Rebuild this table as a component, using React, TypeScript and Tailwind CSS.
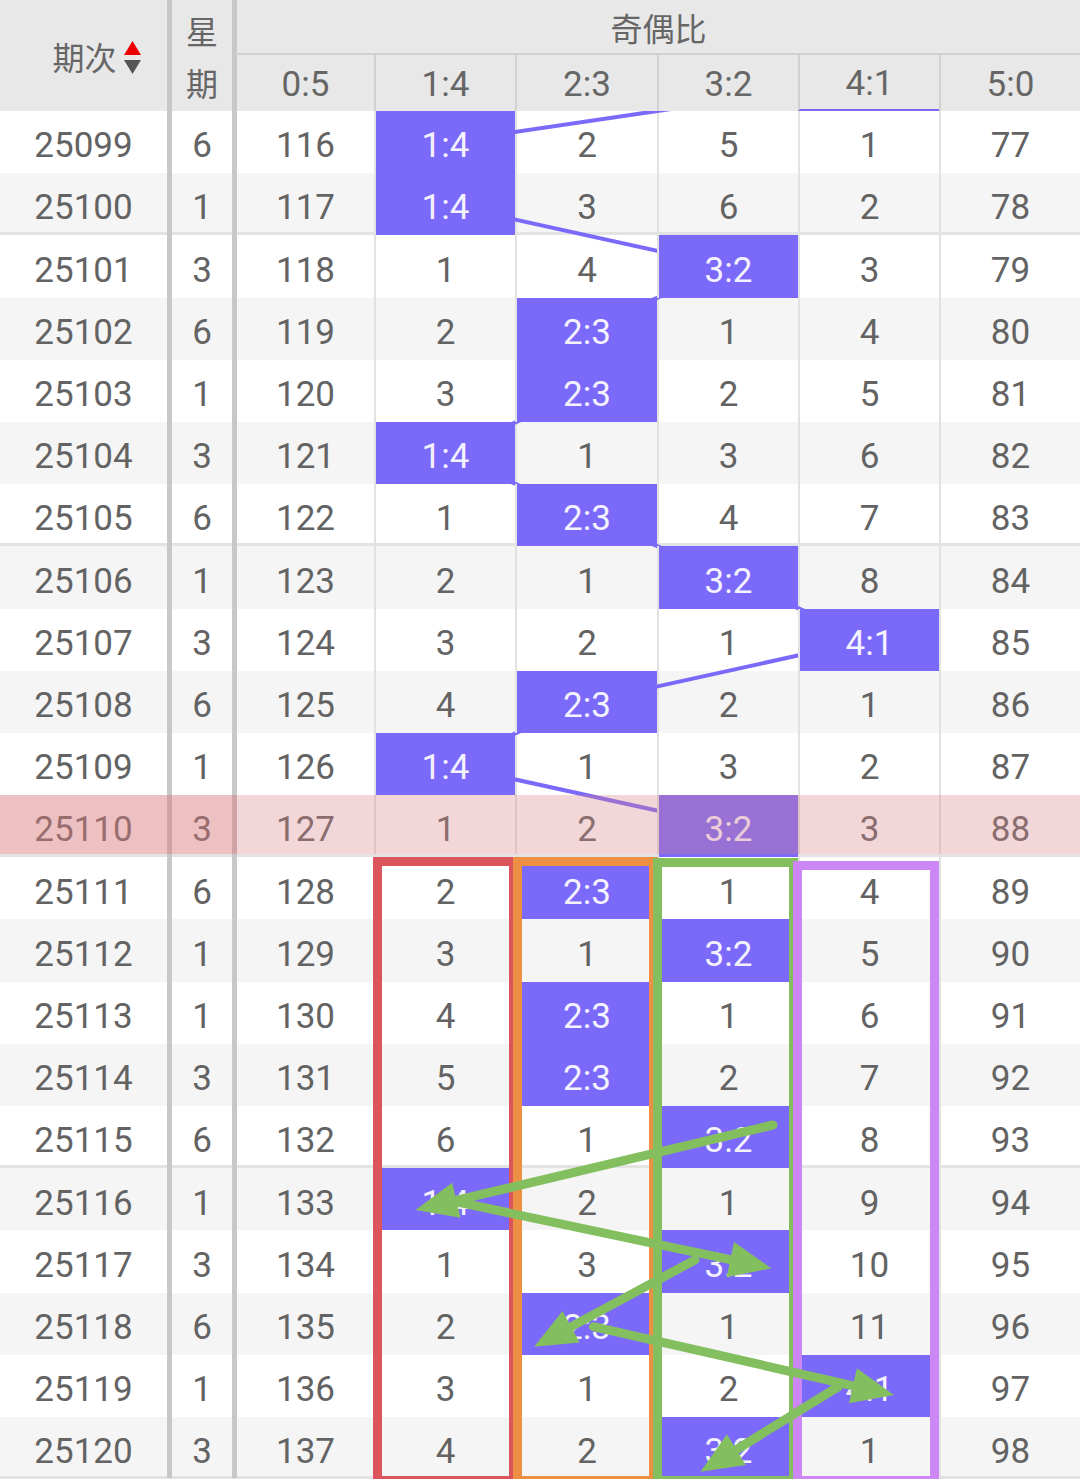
import React from 'react';

const COLS = 'grid-cols-[167px_65px_142px_141px_142px_141px_141px_141px]';
const ROW_H = 62.2;
const BODY_H = ROW_H * 22;
const COL_X = [305.5, 445.5, 587, 728.5, 869.5, 1010.5];
const PURPLE = '#7b69f9';
const GREEN = '#84bf5f';

const rows: [string, string, string[]][] = [
  ['25099', '6', ['116', '1:4', '2', '5', '1', '77']],
  ['25100', '1', ['117', '1:4', '3', '6', '2', '78']],
  ['25101', '3', ['118', '1', '4', '3:2', '3', '79']],
  ['25102', '6', ['119', '2', '2:3', '1', '4', '80']],
  ['25103', '1', ['120', '3', '2:3', '2', '5', '81']],
  ['25104', '3', ['121', '1:4', '1', '3', '6', '82']],
  ['25105', '6', ['122', '1', '2:3', '4', '7', '83']],
  ['25106', '1', ['123', '2', '1', '3:2', '8', '84']],
  ['25107', '3', ['124', '3', '2', '1', '4:1', '85']],
  ['25108', '6', ['125', '4', '2:3', '2', '1', '86']],
  ['25109', '1', ['126', '1:4', '1', '3', '2', '87']],
  ['25110', '3', ['127', '1', '2', '3:2', '3', '88']],
  ['25111', '6', ['128', '2', '2:3', '1', '4', '89']],
  ['25112', '1', ['129', '3', '1', '3:2', '5', '90']],
  ['25113', '1', ['130', '4', '2:3', '1', '6', '91']],
  ['25114', '3', ['131', '5', '2:3', '2', '7', '92']],
  ['25115', '6', ['132', '6', '1', '3:2', '8', '93']],
  ['25116', '1', ['133', '1:4', '2', '1', '9', '94']],
  ['25117', '3', ['134', '1', '3', '3:2', '10', '95']],
  ['25118', '6', ['135', '2', '2:3', '1', '11', '96']],
  ['25119', '1', ['136', '3', '1', '2', '4:1', '97']],
  ['25120', '3', ['137', '4', '2', '3:2', '1', '98']],
];

const hlIndex = (cells: string[]) => cells.findIndex((c, i) => i > 0 && c.includes(':'));

function purplePoints() {
  const pts: string[] = [`${COL_X[4]},${ROW_H / 2 - ROW_H}`];
  for (let i = 0; i < 12; i++) {
    const c = hlIndex(rows[i][2]);
    pts.push(`${COL_X[c]},${ROW_H / 2 + ROW_H * i}`);
  }
  return pts.join(' ');
}

const arrows: [number, number, number, number][] = [
  [773, 1125, 415.5, 1210],
  [455.7, 1201.7, 771.4, 1268.3],
  [694.9, 1260, 534.1, 1346.7],
  [593.4, 1326.7, 893.9, 1395],
  [838.4, 1386.7, 700.6, 1471.7],
];

function Arrow({ a }: { a: [number, number, number, number] }) {
  const [sx, sy, tx, ty] = a;
  const dx = tx - sx;
  const dy = ty - sy;
  const len = Math.hypot(dx, dy);
  const ux = dx / len;
  const uy = dy / len;
  const L = 42;
  const W = 18;
  const bx = tx - L * ux;
  const by = ty - L * uy;
  const px = -uy;
  const py = ux;
  const ex = tx - (L - 6) * ux;
  const ey = ty - (L - 6) * uy;
  return (
    <g>
      <line x1={sx} y1={sy} x2={ex} y2={ey} stroke={GREEN} strokeWidth={9} strokeLinecap="round" />
      <polygon
        points={`${tx},${ty} ${bx + W * px},${by + W * py} ${bx - W * px},${by - W * py}`}
        fill={GREEN}
      />
    </g>
  );
}

const boxes = [
  { left: 373, top: 746, w: 145, h: 628, color: '#dc555c' },
  { left: 513, top: 746, w: 145, h: 628, color: '#ee9043' },
  { left: 653, top: 747, w: 145, h: 627, color: '#84bf5f' },
  { left: 793, top: 750, w: 146, h: 624, color: '#cc87f5' },
];

export default function App() {
  return (
    <div className="relative w-[1080px] h-[1480px] overflow-hidden bg-white font-['Roboto','Noto_Sans_CJK_SC',sans-serif] text-[#636363]">
      {/* Header */}
      <div className={`grid ${COLS} grid-rows-[55px_56px] bg-[#e8e8e8] text-[#666]`}>
        <div className="row-span-2 flex items-center justify-center pl-[26px] text-[32px] font-['Noto_Sans_CJK_SC',sans-serif]">
          <span>期次</span>
          <svg width="17" height="34" viewBox="0 0 17 34" className="ml-[7px] mt-[4px]">
            <polygon points="8.5,0 17,14 0,14" fill="#ee0000" />
            <polygon points="0,19 17,19 8.5,33" fill="#555555" />
          </svg>
        </div>
        <div className="row-span-2 flex flex-col items-center justify-center border-l-[5px] border-l-[#c8c8c8] text-[32px] leading-[52px] font-['Noto_Sans_CJK_SC',sans-serif]">
          <span>星</span>
          <span>期</span>
        </div>
        <div className="col-span-6 flex items-center justify-center border-l-[5px] border-l-[#c8c8c8] border-b-2 border-b-[#d0d0d0] text-[32px] font-['Noto_Sans_CJK_SC',sans-serif]">
          奇偶比
        </div>
        {['0:5', '1:4', '2:3', '3:2', '4:1', '5:0'].map((l, i) => (
          <div
            key={l}
            className={
              'flex items-center justify-center pt-[4px] text-[35px] ' +
              (i === 0 ? 'border-l-[5px] border-l-[#c8c8c8] ' : 'border-l-2 border-l-[#d2d2d2] ') +
              (i === 4 ? 'border-b-2 border-b-[#7b69f9]' : '')
            }
          >
            {l}
          </div>
        ))}
      </div>

      {/* Body */}
      <div className="relative isolate overflow-hidden" style={{ height: BODY_H }}>
        {rows.map(([qi, wk, cells], idx) => {
          const bg = idx === 11 || idx % 2 === 0 ? 'bg-white' : 'bg-[#f5f5f5]';
          const sep = idx % 5 === 1 ? 'border-b-[3px] border-b-[#e3e3e3]' : '';
          return (
            <div key={qi} className={`relative grid ${COLS} h-[62.2px] ${bg} ${sep} text-[35px]`}>
              <div className="flex items-center justify-center pt-[9px]">{qi}</div>
              <div className="flex items-center justify-center pt-[9px] border-l-[5px] border-l-[#c8c8c8]">{wk}</div>
              {cells.map((c, i) => {
                const hl = i > 0 && c.includes(':');
                return (
                  <div
                    key={i}
                    className={
                      'flex items-center justify-center pt-[9px] ' +
                      (i === 0 ? 'border-l-[5px] border-l-[#c8c8c8] ' : 'border-l-2 border-l-[#e2e2e2] ') +
                      (hl ? 'relative z-10 bg-[#7b69f9] bg-clip-padding text-[#f4f2ff]' : '')
                    }
                  >
                    {c}
                  </div>
                );
              })}
              {idx === 11 && (
                <>
                  <div className="pointer-events-none absolute inset-0 z-20 bg-[rgba(215,130,136,0.33)]" />
                  <div className="pointer-events-none absolute left-0 top-0 bottom-0 w-[237px] z-20 bg-[rgba(220,110,110,0.2)]" />
                </>
              )}
            </div>
          );
        })}
        <svg
          className="pointer-events-none absolute left-0 top-0 z-0"
          width={1080}
          height={BODY_H}
        >
          <polyline points={purplePoints()} fill="none" stroke={PURPLE} strokeWidth={4} strokeLinejoin="round" />
        </svg>
        {boxes.map((b, i) => (
          <div
            key={i}
            className="pointer-events-none absolute z-30 border-[9px]"
            style={{ left: b.left, top: b.top, width: b.w, height: b.h, borderColor: b.color }}
          />
        ))}
      </div>

      {/* Green arrows */}
      <svg className="pointer-events-none absolute left-0 top-0 z-50" width={1080} height={1480}>
        {arrows.map((a, i) => (
          <Arrow key={i} a={a} />
        ))}
      </svg>
    </div>
  );
}
